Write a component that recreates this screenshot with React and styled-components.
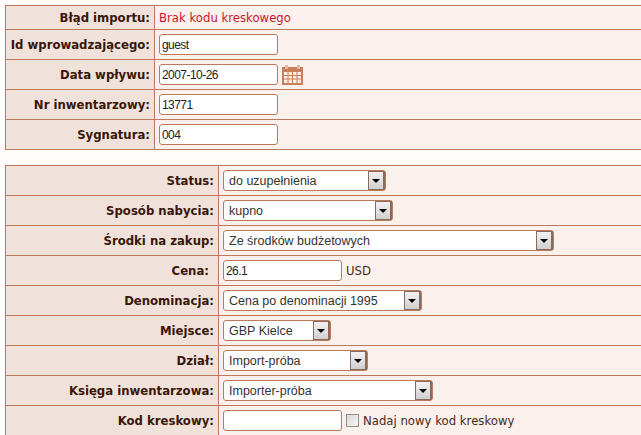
import styled, { createGlobalStyle } from "styled-components"

const GlobalStyle = createGlobalStyle`
  html, body {
    margin: 0;
    padding: 0;
    background: #fffdfc;
    overflow: hidden;
  }
  body {
    height: 435px;
  }
`

const Page = styled.div`
  width: 641px;
  height: 435px;
  padding: 5px 0 0 5px;
  box-sizing: border-box;
  overflow: hidden;
  display: flex;
  flex-direction: column;
  gap: 15px;
`

const FormTable = styled.table`
  width: 637px;
  flex: none;
  border-collapse: collapse;
  table-layout: fixed;
  font-family: "DejaVu Sans", Verdana, sans-serif;
  font-size: 11.7px;
  color: #3a1608;
`

const Row = styled.tr`
  height: ${(props) => props.$height || 30}px;
`

const Label = styled.th`
  width: ${(props) => props.$width}px;
  box-sizing: border-box;
  padding: 1px ${(props) => props.$right || 4}px 0 0;
  border: 1px solid #b97b5c;
  background: #f0e2da;
  text-align: right;
  font-weight: bold;
  white-space: nowrap;
`

const Value = styled.td`
  box-sizing: border-box;
  padding: 0 0 0 4px;
  border: 1px solid #b97b5c;
  background: #faf0ec;
  white-space: nowrap;
`

const Line = styled.div`
  display: flex;
  align-items: center;
  gap: 4px;
`

const ErrorText = styled.span`
  display: block;
  padding-top: 1px;
  color: #cc1530;
`

const Unit = styled.span`
  color: #4a2a1c;
`

const TextInput = styled.div`
  box-sizing: border-box;
  width: 119px;
  height: 21px;
  padding: 0 2px;
  border: 1px solid #b97b5c;
  border-radius: 3px;
  background: #fff;
  font-family: "Liberation Sans", Arial, sans-serif;
  font-size: 12px;
  letter-spacing: -0.55px;
  line-height: 20px;
  color: #222;
`

const SelectBox = styled.div`
  box-sizing: border-box;
  display: flex;
  justify-content: space-between;
  width: ${(props) => props.$width}px;
  height: 21px;
  border: 1px solid #b97b5c;
  border-radius: 3px;
  background: #fff;
  font-family: "Liberation Sans", Arial, sans-serif;
  font-size: 12.5px;
  line-height: 20px;
  color: #333;
`

const SelectText = styled.span`
  padding-left: 5px;
`

const SelectButton = styled.span`
  box-sizing: border-box;
  display: flex;
  align-items: center;
  justify-content: center;
  width: 17px;
  height: 19px;
  border: 1px solid #8a6a5a;
  border-right-width: 2px;
  background: linear-gradient(#f2f2f2, #cfcfcf);
`

const Arrow = styled.span`
  width: 0;
  height: 0;
  border-left: 4px solid transparent;
  border-right: 4px solid transparent;
  border-top: 4px solid #000;
`

const CheckBox = styled.span`
  box-sizing: border-box;
  width: 13px;
  height: 13px;
  border: 1px solid #8f8f8f;
  background: linear-gradient(135deg, #d8d8d8, #f6f6f6);
`

const CalendarIcon = () => (
  <svg width="21" height="21" viewBox="0 0 21 21">
    <rect x="0" y="3" width="21" height="18" fill="#c9805a" />
    <rect x="3" y="1" width="3" height="4" fill="#e3b9a0" />
    <rect x="15" y="1" width="3" height="4" fill="#e3b9a0" />
    <rect x="2" y="8" width="17" height="11" fill="#fbeee6" />
    <path d="M2 11.5h17M2 15h17M6 8v11M10.500 8v11M15 8v11" stroke="#c9805a" />
  </svg>
)

const Select = ({ width, children }) => (
  <SelectBox $width={width}>
    <SelectText>{children}</SelectText>
    <SelectButton>
      <Arrow />
    </SelectButton>
  </SelectBox>
)

const importRows = [
  { label: "Id wprowadzającego:", value: "guest" },
  { label: "Data wpływu:", value: "2007-10-26", calendar: true },
  { label: "Nr inwentarzowy:", value: "13771" },
  { label: "Sygnatura:", value: "004" },
]

const selectsTop = [
  { label: "Status:", value: "do uzupełnienia", width: 163 },
  { label: "Sposób nabycia:", value: "kupno", width: 170 },
  { label: "Środki na zakup:", value: "Ze środków budżetowych", width: 331 },
]

const selectsBottom = [
  { label: "Denominacja:", value: "Cena po denominacji 1995", width: 199 },
  { label: "Miejsce:", value: "GBP Kielce", width: 108 },
  { label: "Dział:", value: "Import-próba", width: 145 },
  { label: "Księga inwentarzowa:", value: "Importer-próba", width: 210 },
]

const SelectRow = ({ label, value, width }) => (
  <Row>
    <Label $width={213}>{label}</Label>
    <Value>
      <Select width={width}>{value}</Select>
    </Value>
  </Row>
)

const App = () => {
  return (
    <Page>
      <GlobalStyle />
      <FormTable>
        <tbody>
          <Row $height={24}>
            <Label $width={149}>Błąd importu:</Label>
            <Value>
              <ErrorText>Brak kodu kreskowego</ErrorText>
            </Value>
          </Row>
          {importRows.map((row) => (
            <Row key={row.label}>
              <Label $width={149}>{row.label}</Label>
              <Value>
                <Line>
                  <TextInput>{row.value}</TextInput>
                  {row.calendar && <CalendarIcon />}
                </Line>
              </Value>
            </Row>
          ))}
        </tbody>
      </FormTable>
      <FormTable>
        <tbody>
          {selectsTop.map((row) => (
            <SelectRow key={row.label} {...row} />
          ))}
          <Row>
            <Label $width={213} $right={9}>
              Cena:
            </Label>
            <Value>
              <Line>
                <TextInput>26.1</TextInput>
                <Unit>USD</Unit>
              </Line>
            </Value>
          </Row>
          {selectsBottom.map((row) => (
            <SelectRow key={row.label} {...row} />
          ))}
          <Row>
            <Label $width={213}>Kod kreskowy:</Label>
            <Value>
              <Line>
                <TextInput />
                <CheckBox />
                <Unit>Nadaj nowy kod kreskowy</Unit>
              </Line>
            </Value>
          </Row>
        </tbody>
      </FormTable>
    </Page>
  )
}

export default App
